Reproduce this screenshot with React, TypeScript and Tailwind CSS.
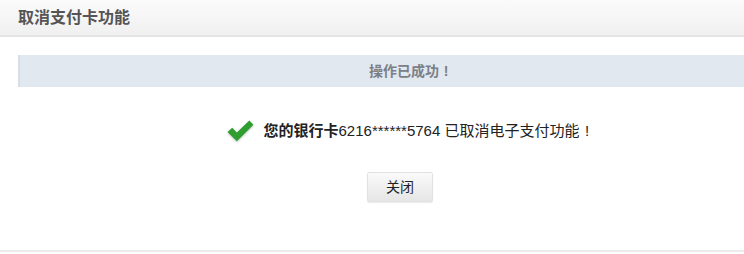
import React from 'react'

const font = '"Liberation Sans", "Noto Sans CJK SC", sans-serif'

function CheckIcon() {
  return (
    <svg width="29" height="25" viewBox="0 0 28 24" className="drop-shadow-[0_1px_1px_rgba(0,0,0,0.25)]">
      <path d="M1.5 12.5 L6 8.5 L10.5 13 L22.5 1.5 L26.5 5.5 L10.5 21.5 Z" fill="#2f9e2f" />
    </svg>
  )
}

// full-width exclamation, kept at 1em
function Bang() {
  return <span className="inline-block w-[1em] text-center">!</span>
}

export default function App() {
  return (
    <div className="w-[744px] h-[254px] overflow-hidden bg-white" style={{ fontFamily: font }}>
      {/* Header */}
      <div className="h-[37px] bg-gradient-to-b from-[#fbfbfb] to-[#f0f0f0] border-b-2 border-[#e4e4e4] flex items-center px-[18px]">
        <span className="text-[16px] font-bold text-[#555]">取消支付卡功能</span>
      </div>

      {/* Body */}
      <div className="h-[215px] border-b-2 border-[#ebebeb]">
        <div className="pt-[18px] pl-[18px] w-[802px]">
          <div className="h-[32px] bg-[#e2e8f0] border-l-2 border-[#d8dee7] flex items-center justify-center text-[14px] font-bold text-[#7b8088]">
            <span>
              操作已成功<Bang />
            </span>
          </div>
          <div className="mt-[32px] flex items-center justify-center gap-[9px] text-[15px] text-[#222]">
            <CheckIcon />
            <span>
              <b>您的银行卡</b>6216******5764 已取消电子支付功能<Bang />
            </span>
          </div>
          <div className="mt-[28px] flex justify-center pr-[20px]">
            <button className="w-[66px] h-[30px] rounded-[2px] border border-[#e2e2e2] bg-gradient-to-b from-[#fafafa] to-[#e6e6e6] text-[14px] text-[#222] shadow-[0_1px_1px_rgba(0,0,0,0.08)]">
              关闭
            </button>
          </div>
        </div>
      </div>
    </div>
  )
}
